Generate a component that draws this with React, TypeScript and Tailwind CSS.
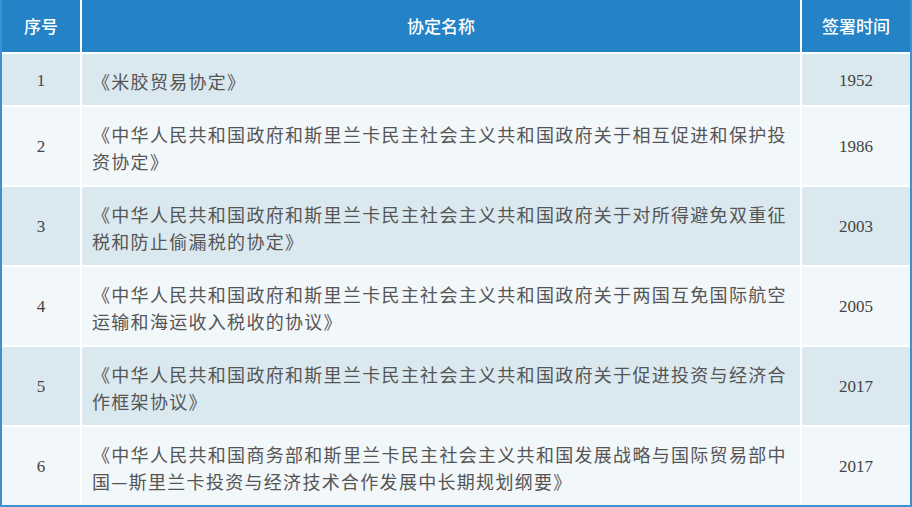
import React from "react";

const rows: { no: string; name: string[]; year: string }[] = [
  { no: "1", name: ["《米胶贸易协定》"], year: "1952" },
  {
    no: "2",
    name: [
      "《中华人民共和国政府和斯里兰卡民主社会主义共和国政府关于相互促进和保护投",
      "资协定》",
    ],
    year: "1986",
  },
  {
    no: "3",
    name: [
      "《中华人民共和国政府和斯里兰卡民主社会主义共和国政府关于对所得避免双重征",
      "税和防止偷漏税的协定》",
    ],
    year: "2003",
  },
  {
    no: "4",
    name: [
      "《中华人民共和国政府和斯里兰卡民主社会主义共和国政府关于两国互免国际航空",
      "运输和海运收入税收的协议》",
    ],
    year: "2005",
  },
  {
    no: "5",
    name: [
      "《中华人民共和国政府和斯里兰卡民主社会主义共和国政府关于促进投资与经济合",
      "作框架协议》",
    ],
    year: "2017",
  },
  {
    no: "6",
    name: [
      "《中华人民共和国商务部和斯里兰卡民主社会主义共和国发展战略与国际贸易部中",
      "国—斯里兰卡投资与经济技术合作发展中长期规划纲要》",
    ],
    year: "2017",
  },
];

const cjk = "font-['Noto_Sans_CJK_SC','Noto_Sans',sans-serif]";
const serif = "font-['Liberation_Serif','DejaVu_Serif',serif]";

export default function App() {
  return (
    <div className="w-[912px] h-[507px] bg-white">
      <div className="grid grid-cols-[78px_718px_108px] gap-[2px] bg-white border-x-2 border-b-2 border-[#3d90d1]">
        <div className={`h-[52px] bg-[#2383c6] flex items-center justify-center text-white text-[17px] font-medium ${cjk}`}>
          序号
        </div>
        <div className={`h-[52px] bg-[#2383c6] flex items-center justify-center text-white text-[17px] font-medium ${cjk}`}>
          协定名称
        </div>
        <div className={`h-[52px] bg-[#2383c6] flex items-center justify-center text-white text-[17px] font-medium ${cjk}`}>
          签署时间
        </div>
        {rows.map((r, i) => {
          const bg = i % 2 === 0 ? "bg-[#dae9ef]" : "bg-[#f2f7fa]";
          const h = i === 0 ? "h-[51px]" : "h-[78px]";
          return (
            <React.Fragment key={r.no}>
              <div className={`${h} ${bg} flex items-center justify-center pt-[2px] text-[17px] text-[#444] ${serif}`}>
                {r.no}
              </div>
              <div
                className={`${h} ${bg} flex flex-col justify-center pl-[10px] pt-[3px] text-[18px] leading-[27px] tracking-[1.3px] text-[#555] ${cjk}`}
              >
                {r.name.map((line) => (
                  <div key={line} className="whitespace-nowrap">
                    {line}
                  </div>
                ))}
              </div>
              <div className={`${h} ${bg} flex items-center justify-center pt-[2px] text-[17px] text-[#444] ${serif}`}>
                {r.year}
              </div>
            </React.Fragment>
          );
        })}
      </div>
    </div>
  );
}
